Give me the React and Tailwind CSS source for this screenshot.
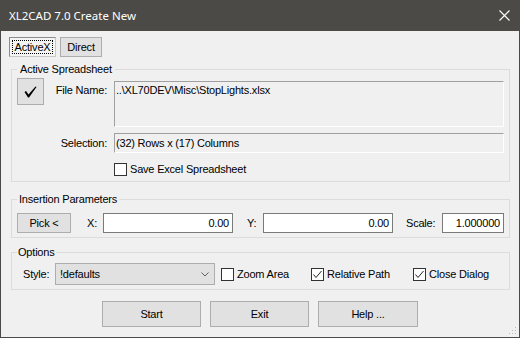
import React from "react";

const CheckBox = ({ checked, label, className = "" }) => (
  <label className={`flex items-center ${className}`}>
    <span className="flex h-[13px] w-[13px] items-center justify-center border border-[#333333] bg-white">
      {checked && (
        <svg width="11" height="11" viewBox="0 0 11 11">
          <path d="M1.5 5.5 L4 8.5 L9.5 2" fill="none" stroke="#222" strokeWidth="1" />
        </svg>
      )}
    </span>
    <span className="ml-[3px]">{label}</span>
  </label>
);

const Button = ({ children, className = "" }) => (
  <button className={`flex items-center justify-center border border-[#adadad] bg-[#e1e1e1] ${className}`}>
    {children}
  </button>
);

const NumBox = ({ value, className = "" }) => (
  <div className={`h-[20px] border border-[#7a7a7a] bg-white pr-[3px] text-right leading-[18px] ${className}`}>
    {value}
  </div>
);

const App = () => {
  return (
    <div className="relative flex h-[338px] w-[520px] flex-col border-x border-b border-[#4b4a47] bg-[#f0f0f0] font-['Liberation_Sans',Arial,sans-serif] text-[11px] tracking-[-0.2px] text-black">
      {/* title bar */}
      <div className="flex h-[31px] shrink-0 items-center justify-between bg-[#4b4a47] pl-[8px] pr-[9px]">
        <span className="font-['Noto_Sans',sans-serif] text-[11.5px] tracking-normal text-white">XL2CAD 7.0 Create New</span>
        <svg width="11" height="11" viewBox="0 0 11 11">
          <path d="M0.5 0.5 L10.5 10.5 M10.5 0.5 L0.5 10.5" stroke="#ffffff" strokeWidth="1.1" />
        </svg>
      </div>

      {/* tabs */}
      <div className="ml-[8px] mt-[6px] flex gap-[4px]">
        <div className="relative flex h-[20px] w-[47px] items-center justify-center border border-t-[#8c8c8c] border-l-[#8c8c8c] border-r-[#c8c8c8] border-b-[#c8c8c8] bg-[#f4f4f4]">
          <span className="absolute inset-[2px] border border-dotted border-black" />
          ActiveX
        </div>
        <Button className="h-[20px] w-[42px]">Direct</Button>
      </div>

      {/* active spreadsheet */}
      <fieldset className="ml-[10px] mr-[9px] mt-[5px] border border-[#dcdcdc] px-[5px] pb-[5px] pt-[2px]">
        <legend className="px-[3px] leading-[14px]">Active Spreadsheet</legend>
        <div className="flex">
          <Button className="h-[27px] w-[27px] shrink-0">
            <svg width="13" height="12" viewBox="0 0 13 12">
              <path d="M0.5 6 L2 5 L4.5 8.5 L11.5 0.5 L12.5 1 L5 11.5 L4 11.5 Z" fill="#000" />
            </svg>
          </Button>
          <span className="mt-[6px] w-[63px] shrink-0 text-right leading-[12px]">File Name:</span>
          <div className="ml-[7px] mt-[3px] h-[46px] flex-1 border border-t-[#a0a0a0] border-l-[#a0a0a0] border-r-white border-b-white pl-[1px] pt-[2px] leading-[12px]">
            ..\XL70DEV\Misc\StopLights.xlsx
          </div>
        </div>
        <div className="mt-[6px] flex items-center">
          <span className="w-[90px] shrink-0 text-right">Selection:</span>
          <div className="ml-[7px] h-[20px] flex-1 border border-t-[#a0a0a0] border-l-[#a0a0a0] border-r-white border-b-white pl-[1px] leading-[18px]">
            (32) Rows x (17) Columns
          </div>
        </div>
        <CheckBox className="ml-[97px] mt-[10px] h-[13px]" label="Save Excel Spreadsheet" />
      </fieldset>

      {/* insertion parameters */}
      <fieldset className="ml-[10px] mr-[9px] mt-[10px] border border-[#dcdcdc] px-[5px] pb-[4px] pt-[7px]">
        <legend className="px-[2px] leading-[14px]">Insertion Parameters</legend>
        <div className="flex h-[20px] items-center">
          <Button className="h-[20px] w-[54px]">Pick &lt;</Button>
          <span className="w-[32px] pl-[16px]">X:</span>
          <NumBox value="0.00" className="w-[130px]" />
          <span className="w-[30px] pl-[14px]">Y:</span>
          <NumBox value="0.00" className="w-[130px]" />
          <span className="w-[49px] pl-[13px]">Scale:</span>
          <NumBox value="1.000000" className="w-[62px]" />
        </div>
      </fieldset>

      {/* options */}
      <fieldset className="ml-[10px] mr-[9px] mt-[7px] border border-[#dcdcdc] px-[5px] pb-[4px] pt-[4px]">
        <legend className="px-[1px] leading-[14px]">Options</legend>
        <div className="flex h-[22px] items-center">
          <span className="w-[38px] pl-[6px]">Style:</span>
          <div className="flex h-[22px] w-[160px] items-center justify-between border border-[#adadad] bg-[#e1e1e1] pl-[4px] pr-[5px]">
            <span>!defaults</span>
            <svg width="8" height="5" viewBox="0 0 8 5">
              <path d="M0.5 0.5 L4 4 L7.5 0.5" fill="none" stroke="#606060" strokeWidth="1" />
            </svg>
          </div>
          <CheckBox className="ml-[6px] w-[90px]" label="Zoom Area" />
          <CheckBox className="w-[102px]" checked label="Relative Path" />
          <CheckBox checked label="Close Dialog" />
        </div>
      </fieldset>

      {/* buttons */}
      <div className="mt-[11px] flex justify-center gap-[9px]">
        <Button className="h-[26px] w-[99px]">Start</Button>
        <Button className="h-[26px] w-[99px]">Exit</Button>
        <Button className="h-[26px] w-[100px]">Help ...</Button>
      </div>

      {/* size grip */}
      <svg className="absolute bottom-[1px] right-[1px]" width="10" height="10" viewBox="0 0 10 10">
        <rect x="7" y="1" width="1" height="1" fill="#b8b8b8" />
        <rect x="4" y="4" width="1" height="1" fill="#b8b8b8" />
        <rect x="7" y="4" width="1" height="1" fill="#b8b8b8" />
        <rect x="1" y="7" width="1" height="1" fill="#b8b8b8" />
        <rect x="4" y="7" width="1" height="1" fill="#b8b8b8" />
        <rect x="7" y="7" width="1" height="1" fill="#b8b8b8" />
      </svg>
    </div>
  );
};

export default App;
